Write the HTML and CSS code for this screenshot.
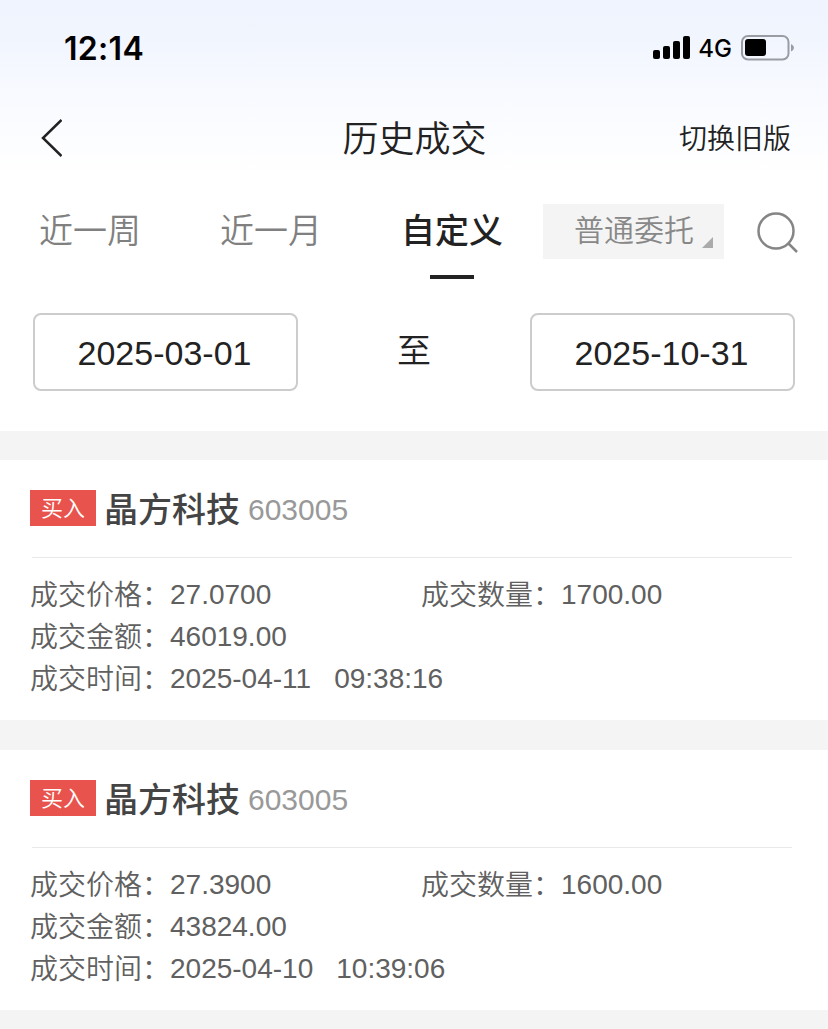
FILE: index.html
```html
<!DOCTYPE html>
<html lang="zh-CN">
<head>
<meta charset="utf-8">
<title>历史成交</title>
<link rel="stylesheet" href="styles.css">
</head>
<body>
<div class="page">
  <header class="header">
    <div class="status">
      <span class="clock">12:14</span>
      <div class="status-right">
        <svg class="signal" width="38" height="24" viewBox="0 0 38 24">
          <rect x="0" y="14" width="7" height="9" rx="2"/>
          <rect x="10" y="10" width="7" height="13" rx="2"/>
          <rect x="20" y="5" width="7" height="18" rx="2"/>
          <rect x="30" y="0" width="7" height="23" rx="2"/>
        </svg>
        <span class="network">4G</span>
        <svg class="battery" width="54" height="26" viewBox="0 0 54 26">
          <rect class="battery-shell" x="1" y="1" width="46.500" height="23.500" rx="6"/>
          <rect x="4" y="4" width="21" height="17" rx="3"/>
          <path class="battery-cap" d="M50 9 Q53 10.500 53 12.750 Q53 15 50 16.500 Z"/>
        </svg>
      </div>
    </div>
    <nav class="nav">
      <svg class="back" width="24" height="40" viewBox="0 0 24 40"><path d="M23.500 2 L5 20 L23.500 38"/></svg>
      <h1 class="title">历史成交</h1>
      <span class="switch">切换旧版</span>
    </nav>
  </header>
  <div class="tabs">
    <span class="tab">近一周</span>
    <span class="tab">近一月</span>
    <span class="tab active">自定义</span>
    <div class="filter">
      <span>普通委托</span>
      <svg class="corner" width="11" height="11" viewBox="0 0 11 11"><path d="M11 0 V11 H0 Z"/></svg>
    </div>
    <svg class="search" width="44" height="44" viewBox="0 0 44 44"><circle cx="20" cy="20" r="17.500"/><path d="M32 32 L41 41"/></svg>
  </div>
  <div class="dates">
    <div class="date">2025-03-01</div>
    <span class="to">至</span>
    <div class="date">2025-10-31</div>
  </div>
  <main class="list">
    <section class="card">
      <div class="card-head"><span class="badge">买入</span><span class="stock">晶方科技</span><span class="code">603005</span></div>
      <div class="rows">
        <div class="row"><span class="label">成交价格：</span><span>27.0700</span><span class="label">成交数量：</span><span>1700.00</span></div>
        <div class="row"><span class="label">成交金额：</span><span>46019.00</span></div>
        <div class="row"><span class="label">成交时间：</span><span>2025-04-11<span class="time">09:38:16</span></span></div>
      </div>
    </section>
    <section class="card">
      <div class="card-head"><span class="badge">买入</span><span class="stock">晶方科技</span><span class="code">603005</span></div>
      <div class="rows">
        <div class="row"><span class="label">成交价格：</span><span>27.3900</span><span class="label">成交数量：</span><span>1600.00</span></div>
        <div class="row"><span class="label">成交金额：</span><span>43824.00</span></div>
        <div class="row"><span class="label">成交时间：</span><span>2025-04-10<span class="time">10:39:06</span></span></div>
      </div>
    </section>
  </main>
</div>
</body>
</html>
```
FILE: styles.css
```css
* { box-sizing: border-box; }
body {
  margin: 0;
  background: #fff;
  font-family: "Liberation Sans", "Noto Sans CJK SC", sans-serif;
  font-weight: 350;
  color: #222;
}
.page { width: 828px; height: 1029px; overflow: hidden; }
.header {
  height: 180px;
  background: linear-gradient(#eff4fe 0, #f1f5fe 35px, #f8faff 95px, #fff 175px);
}
.status {
  height: 96px;
  padding: 0 33px 0 64px;
  display: flex;
  align-items: center;
  justify-content: space-between;
  color: #000;
}
.clock { font: 600 32px/40px Inter, sans-serif; letter-spacing: 0.3px; padding-top: 1px; }
.status-right { display: flex; align-items: center; }
.network { font: 500 24px/30px Inter, sans-serif; margin: 0 9px 0 7px; padding-top: 1px; }
.battery-shell { fill: none; stroke: #999ca2; stroke-width: 2; }
.battery-cap { fill: #999ca2; }
.nav {
  height: 84px;
  padding: 0 37px 0 38px;
  display: grid;
  grid-template-columns: 1fr auto 1fr;
  align-items: center;
}
.back path { fill: none; stroke: #222; stroke-width: 2.500; }
.title { margin: 0; padding-top: 4px; font-size: 36px; line-height: 50px; font-weight: 350; }
.switch { justify-self: end; padding-top: 4px; font-size: 28px; line-height: 40px; }
.tabs {
  height: 133px;
  padding: 24px 28px 0 39px;
  display: flex;
  align-items: flex-start;
}
.tab {
  font-size: 34px;
  line-height: 54px;
  color: #808080;
  margin-right: 79px;
}
.tab.active {
  color: #222;
  font-weight: 500;
  margin-right: 40px;
  display: flex;
  flex-direction: column;
  align-items: center;
}
.tab.active::after { content: ""; width: 44px; height: 4px; background: #222; margin-top: 17px; }
.filter {
  width: 181px;
  height: 55px;
  padding: 0 11px 11px 31px;
  background: #f4f4f4;
  color: #888;
  font-size: 30px;
  line-height: 54px;
  display: flex;
  justify-content: space-between;
  align-items: flex-end;
}
.filter span { height: 44px; }
.corner { fill: #aaa; }
.search { margin: 7px 0 0 auto; fill: none; stroke: #858585; stroke-width: 2.500; }
.dates {
  height: 118px;
  padding: 0 33px;
  display: flex;
  justify-content: space-between;
}
.date {
  width: 265px;
  height: 78px;
  padding-right: 2px;
  border: 2px solid #ccc;
  border-radius: 8px;
  font-size: 34px;
  line-height: 76px;
  text-align: center;
}
.to { font-size: 34px; line-height: 76px; }
.list {
  height: 598px;
  padding: 29px 0;
  background: #f4f4f4;
  display: flex;
  flex-direction: column;
  gap: 30px;
}
.card { flex: none; height: 260px; padding: 0 30px; background: #fff; }
.card-head {
  height: 98px;
  padding-bottom: 2px;
  display: flex;
  align-items: center;
  position: relative;
}
.card-head::after {
  content: "";
  position: absolute;
  left: 2px;
  right: 6px;
  bottom: 0;
  height: 1px;
  background: #e9e9e9;
}
.badge {
  width: 66px;
  height: 36px;
  background: #e9534d;
  color: #fff;
  font-size: 22px;
  line-height: 37px;
  text-align: center;
}
.stock { margin: 0 8px; padding-top: 3px; font-size: 34px; line-height: 48px; font-weight: 500; color: #444; }
.code { font-size: 30px; line-height: 40px; color: #999; padding-top: 4px; }
.rows { padding-top: 16px; font-size: 28px; color: #606060; }
.row {
  height: 42px;
  line-height: 42px;
  display: grid;
  grid-template-columns: 140px 251px 140px 1fr;
  white-space: nowrap;
}
.label { line-height: 44px; }
.time { margin-left: 23px; }
```
